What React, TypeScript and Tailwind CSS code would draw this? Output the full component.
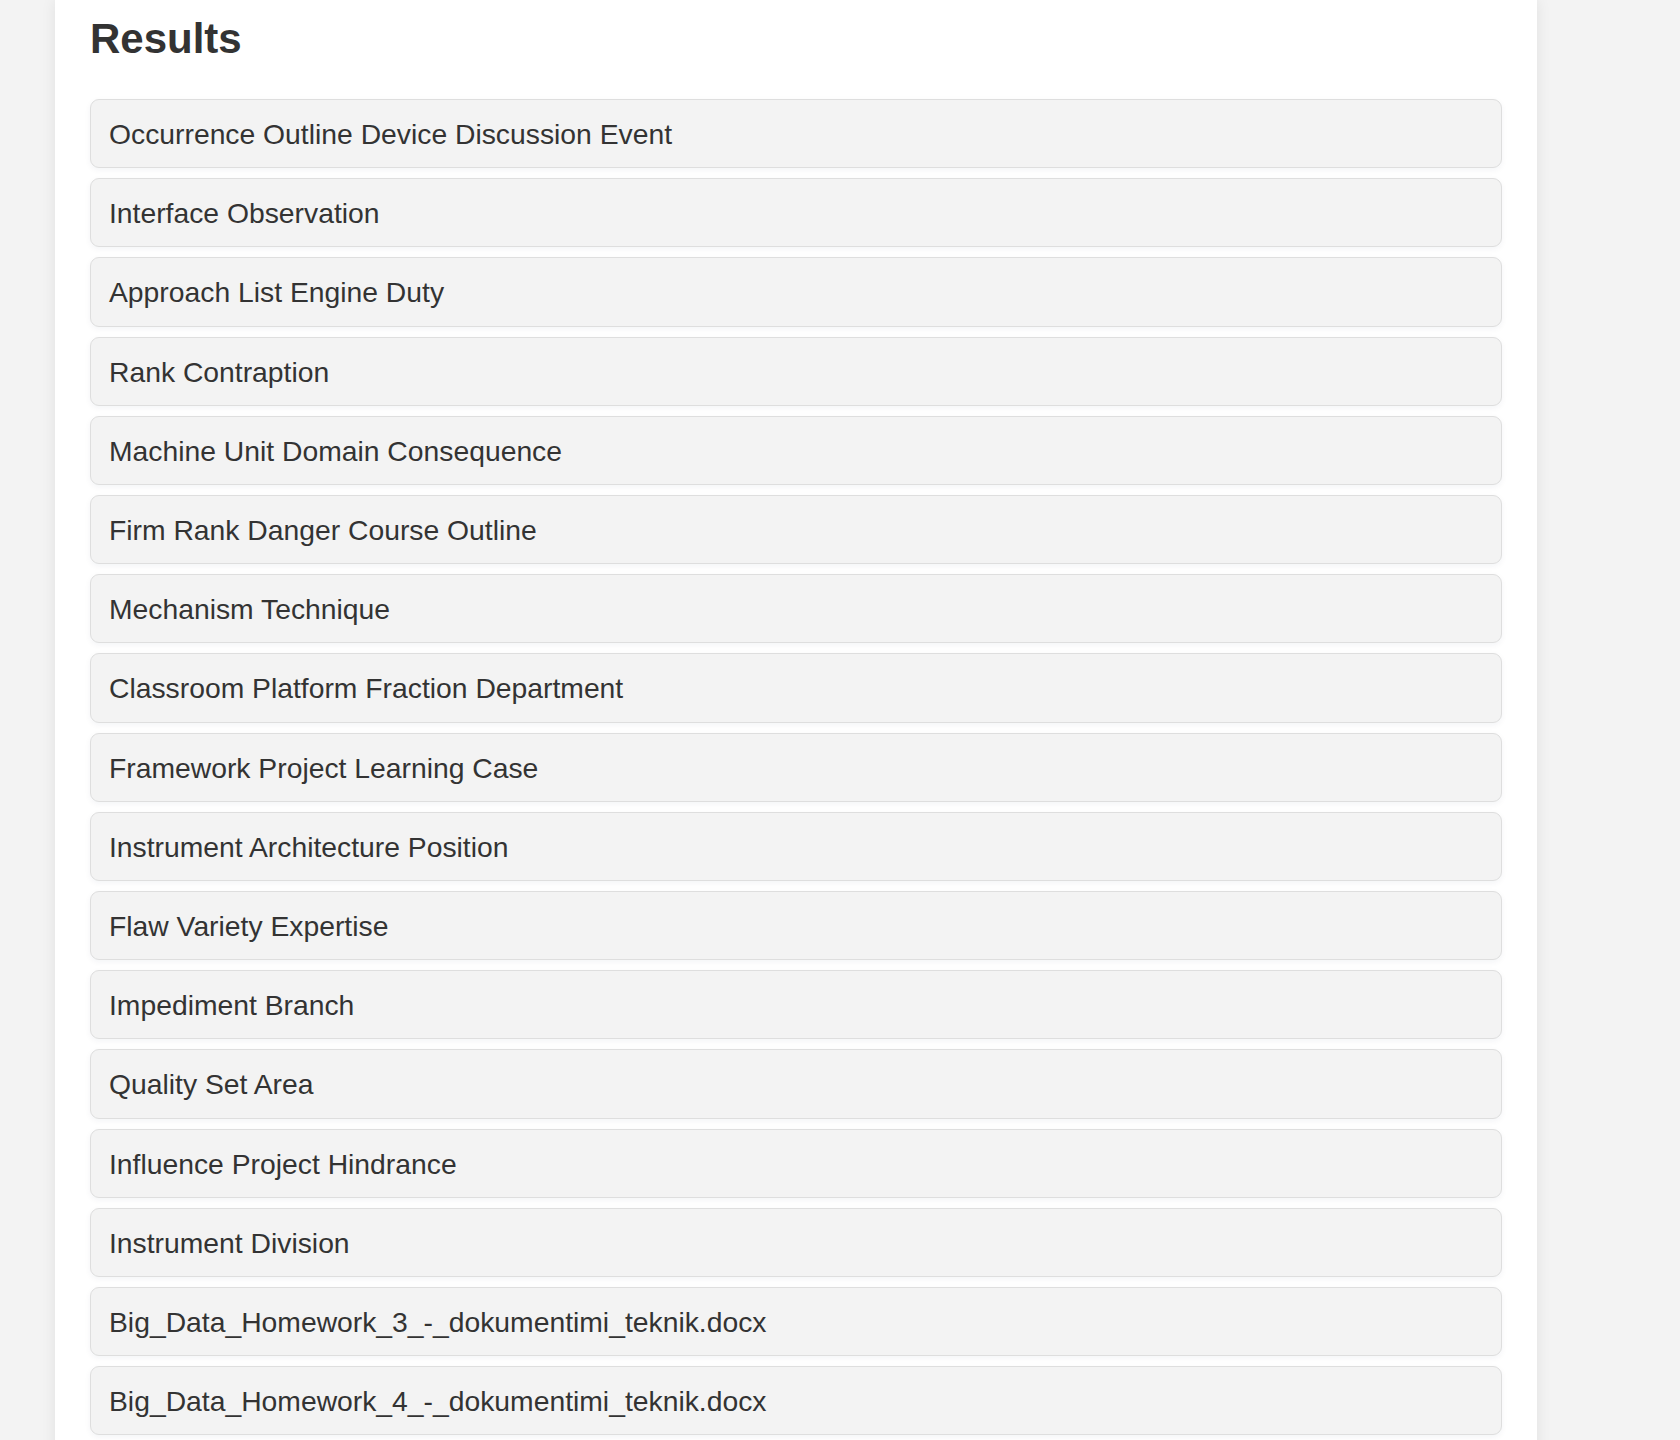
const results = [
    'Occurrence Outline Device Discussion Event',
    'Interface Observation',
    'Approach List Engine Duty',
    'Rank Contraption',
    'Machine Unit Domain Consequence',
    'Firm Rank Danger Course Outline',
    'Mechanism Technique',
    'Classroom Platform Fraction Department',
    'Framework Project Learning Case',
    'Instrument Architecture Position',
    'Flaw Variety Expertise',
    'Impediment Branch',
    'Quality Set Area',
    'Influence Project Hindrance',
    'Instrument Division',
    'Big_Data_Homework_3_-_dokumentimi_teknik.docx',
    'Big_Data_Homework_4_-_dokumentimi_teknik.docx',
];

export default function App() {
    return (
        <div className="min-h-screen h-[1440px] overflow-hidden bg-[#f3f3f3] font-['Liberation_Sans',Arial,sans-serif] text-[#333]">
            <div className="ml-[55px] w-[1482px] min-h-[1500px] bg-white px-[35px] pt-[15px] shadow-[0_0_14px_rgba(0,0,0,0.08)]">
                <h2 className="text-[42px] font-bold leading-[48px] mb-[36px]">Results</h2>

                {/* Result list */}
                <ul className="flex flex-col gap-[10px]">
                    {results.map((title, i) => (
                        <li
                            key={i}
                            className="bg-[#f3f3f3] border border-[#dedede] rounded-[9px] pl-[18px] pr-[17px] pt-[18px] pb-[17px] text-[28.3px] leading-[32.2px] shadow-[0_2px_6px_rgba(0,30,80,0.05)]"
                        >
                            {title}
                        </li>
                    ))}
                </ul>
            </div>
        </div>
    );
}
